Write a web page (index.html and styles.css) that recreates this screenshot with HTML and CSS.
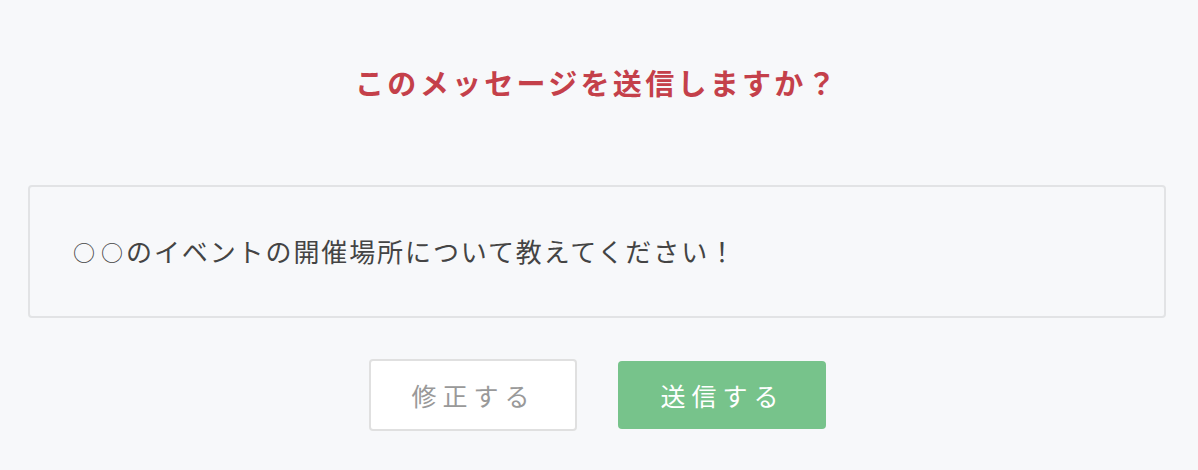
FILE: index.html
```html
<!DOCTYPE html>
<html lang="ja">
<head>
<meta charset="utf-8">
<title>確認</title>
<link rel="stylesheet" href="styles.css">
</head>
<body>
<main class="confirm">
  <h1 class="confirm-title">このメッセージを送信しますか？</h1>
  <div class="message-box">
    <p class="message-text"><span class="mark">○</span><span class="mark">○</span>のイベントの開催場所について教えてください！</p>
  </div>
  <div class="actions">
    <button class="btn btn-edit" type="button">修正する</button>
    <button class="btn btn-send" type="button">送信する</button>
  </div>
</main>
</body>
</html>
```
FILE: styles.css
```css
html, body {
  margin: 0;
  padding: 0;
  background: #f7f8fa;
}
body {
  font-family: "Noto Sans CJK JP", "Noto Sans", sans-serif;
  color: #444;
}
.confirm {
  padding: 57px 32px 0 28px;
  display: flex;
  flex-direction: column;
}
.confirm-title {
  margin: 0;
  text-align: center;
  color: #c4404a;
  font-size: 29px;
  font-weight: 700;
  line-height: 50px;
  letter-spacing: 3.3px;
}
.message-box {
  margin-top: 78px;
  height: 133px;
  border: 2px solid #e2e3e5;
  border-radius: 4px;
  box-sizing: border-box;
  display: flex;
  align-items: center;
  padding: 0 40px;
}
.message-text {
  margin: 0;
  font-size: 26px;
  letter-spacing: 1.9px;
  color: #444;
  line-height: 1.4;
}
.mark {
  display: inline-block;
  width: 28px;
  text-align: center;
  font-size: 22px;
  letter-spacing: 0;
  vertical-align: 1px;
}
.actions {
  margin-top: 41px;
  display: flex;
  justify-content: center;
  align-items: center;
  gap: 41px;
}
.btn {
  font-family: inherit;
  width: 208px;
  height: 70px;
  border-radius: 4px;
  font-size: 25px;
  letter-spacing: 6px;
  padding: 0 0 0 2px;
  cursor: pointer;
}
.btn-edit {
  background: #fff;
  border: 2px solid #e0e0e0;
  color: #999;
  height: 72px;
}
.btn-send {
  background: #77c38b;
  border: none;
  color: #fff;
  height: 68px;
}
```
